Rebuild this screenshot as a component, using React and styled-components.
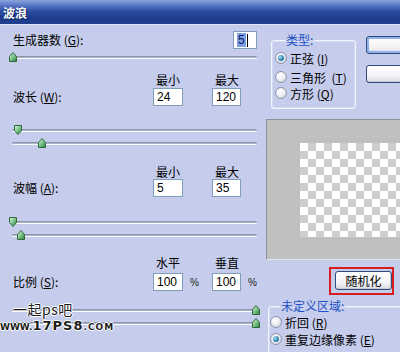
import React from "react";
import styled, { createGlobalStyle } from "styled-components";

const GlobalStyle = createGlobalStyle`
  html, body { margin: 0; padding: 0; background: #c6cdec; }
  body {
    font-family: "Noto Sans CJK SC", "Liberation Sans", sans-serif;
    font-size: 12px;
    color: #000;
  }
`;

const Window = styled.div`
  position: relative;
  width: 400px;
  height: 352px;
  overflow: hidden;
  background: #c6cdec;
  display: flex;
  flex-direction: column;
`;

const TitleBar = styled.div`
  flex: none;
  height: 24px;
  border-bottom: 1px solid #dfe5f6;
  background: linear-gradient(#8ba3dd 0%, #5877c6 22%, #2b4b9f 48%, #1c3a8b 78%, #21408f 100%);
  color: #fff;
  font-weight: bold;
  font-size: 12px;
  line-height: 25px;
  padding-left: 3px;
  text-shadow: 1px 1px 0 #0d2260;
`;

const Body = styled.div`
  display: grid;
  grid-template-columns: 266px 200px;
  align-items: start;
`;

const LeftCol = styled.div`
  display: flex;
  flex-direction: column;
  padding-left: 12px;
`;

const RightCol = styled.div`
  display: flex;
  flex-direction: column;
`;

const Label = styled.div`
  padding-left: 1px;
  line-height: 14px;
  white-space: pre;
`;

const TopRow = styled.div`
  display: flex;
  justify-content: space-between;
  align-items: center;
  width: 245px;
  margin-top: ${(p) => p.$mt}px;
`;

const ParamGrid = styled.div`
  display: grid;
  grid-template-columns: 141px 59px 45px;
  align-items: center;
  margin-top: ${(p) => p.$mt}px;
`;

const ColHead = styled.div`
  width: 30px;
  text-align: center;
  line-height: 14px;
  white-space: nowrap;
`;

const Field = styled.div`
  box-sizing: border-box;
  width: ${(p) => p.$w}px;
  height: 18px;
  border: 1px solid #7f9db9;
  background: #fff;
  font-family: "Liberation Sans", Arial, sans-serif;
  font-size: 12px;
  line-height: 16px;
  padding-left: 3px;
  display: flex;
  align-items: center;
`;

const Selected = styled.span`
  background: #7d9ee0;
  color: #0c1c66;
  padding: 0 1px;
  line-height: 14px;
`;

const Caret = styled.span`
  display: inline-block;
  width: 1px;
  height: 13px;
  background: #000;
  margin-left: 1px;
`;

const FieldWithUnit = styled.div`
  display: flex;
  align-items: center;
  gap: 7px;
`;

const Unit = styled.span`
  font-family: "Liberation Sans", Arial, sans-serif;
  font-size: 10px;
  color: #222;
`;

const SliderStack = styled.div`
  display: flex;
  flex-direction: column;
  gap: 3px;
  margin-top: ${(p) => p.$mt}px;
`;

const SliderBox = styled.div`
  position: relative;
  width: 245px;
  height: 10px;
`;

const Track = styled.div`
  position: absolute;
  left: 0;
  right: 0;
  top: 4px;
  height: 3px;
  border-radius: 2px;
  background: linear-gradient(#8c94ae 0 1px, #a9b1c7 1px 2px, #fbfcff 2px 3px);
`;

const Thumb = styled.svg`
  position: absolute;
  top: 0;
  left: ${(p) => p.$x}px;
`;

function Slider({ x, down }) {
  return (
    <SliderBox>
      <Track />
      <Thumb $x={x - 4} width="8" height="10" viewBox="0 0 8 10">
        <defs>
          <linearGradient id="tg" x1="0" y1="0" x2="1" y2="1">
            <stop offset="0" stopColor="#e8f6e8" />
            <stop offset="0.5" stopColor="#7cc48a" />
            <stop offset="1" stopColor="#2f7a3e" />
          </linearGradient>
        </defs>
        <path
          d={down ? "M0.5 0.5 H7.5 V5.5 L4 9.5 L0.5 5.5 Z" : "M4 0.5 L7.5 4.5 V9.5 H0.5 V4.5 Z"}
          fill="url(#tg)"
          stroke="#2c6a38"
          strokeWidth="1"
        />
      </Thumb>
    </SliderBox>
  );
}

const Group = styled.fieldset`
  box-sizing: border-box;
  margin: ${(p) => p.$mt}px 0 0 ${(p) => p.$ml}px;
  padding: 0 0 0 ${(p) => p.$pl}px;
  width: ${(p) => p.$w}px;
  height: ${(p) => p.$h}px;
  border: 1px solid #f3f5fc;
  border-radius: 3px;
  box-shadow: inset 0 0 0 1px #d4daf0;
  min-width: 0;
`;

const Legend = styled.legend`
  margin-left: ${(p) => p.$ml}px;
  padding: 0 1px;
  color: #2150c4;
  line-height: 14px;
`;

const RadioRow = styled.div`
  display: flex;
  align-items: center;
  gap: 3px;
  height: 16px;
  margin-top: ${(p) => p.$mt}px;
  white-space: pre;
`;

const RadioDot = styled.span`
  box-sizing: border-box;
  width: 12px;
  height: 12px;
  border-radius: 50%;
  border: 1px solid #8d94aa;
  background: radial-gradient(circle at 40% 35%, #ffffff 0%, #eceef4 45%, #c9ccd8 100%);
  display: flex;
  align-items: center;
  justify-content: center;
  flex: none;
  &::after {
    content: "";
    display: ${(p) => (p.$on ? "block" : "none")};
    width: 6px;
    height: 6px;
    border-radius: 50%;
    background: radial-gradient(circle at 35% 35%, #a9e2ee 0%, #3a8fb8 50%, #1b5d82 100%);
  }
`;

function Radio({ on, mt, children }) {
  return (
    <RadioRow $mt={mt}>
      <RadioDot $on={on} />
      <span>{children}</span>
    </RadioRow>
  );
}

const HeadRow = styled.div`
  display: flex;
  align-items: flex-start;
`;

const ButtonCol = styled.div`
  display: flex;
  flex-direction: column;
  gap: 11px;
  margin: 11px 0 0 10px;
`;

const DlgButton = styled.div`
  box-sizing: border-box;
  width: ${(p) => p.$w}px;
  height: ${(p) => p.$h}px;
  border: 1px solid #2d4a78;
  border-radius: 3px;
  background: linear-gradient(#ffffff 0%, #f4f4f6 60%, #dcdde4 100%);
  box-shadow: ${(p) => (p.$focus ? "inset 0 0 0 2px #8fb2ea" : "inset -1px -1px 0 #c8cad6")};
  display: flex;
  align-items: center;
  justify-content: center;
  font-size: 12px;
  line-height: 14px;
`;

const Preview = styled.div`
  box-sizing: border-box;
  margin-top: 10px;
  width: 200px;
  height: 141px;
  background: #c0c0c0;
  border-top: 1px solid #8c8f9c;
  border-left: 1px solid #8c8f9c;
  border-bottom: 1px solid #e2e4ec;
  padding: 23px 0 0 33px;
`;

const Checker = styled.div`
  width: 166px;
  height: 94px;
  background: conic-gradient(#cdcdcd 0 25%, #ffffff 0 50%, #cdcdcd 0 75%, #ffffff 0) 0 0 / 16px 16px;
`;

const Highlight = styled.div`
  box-sizing: border-box;
  margin: 7px 0 0 63px;
  width: 65px;
  height: 28px;
  border: 2px solid #d81f1f;
  padding: 2px 0 0 4px;
`;

const Watermark = styled.div`
  position: absolute;
  left: ${(p) => p.$x}px;
  top: ${(p) => p.$y}px;
  color: #1d1d1d;
  white-space: nowrap;
  display: flex;
  align-items: baseline;
  text-shadow: 1px 0 0 #fff, -1px 0 0 #fff, 0 1px 0 #fff, 0 -1px 0 #fff;
`;

const WmLine = styled.span`
  font-size: 14px;
  line-height: 15px;
  letter-spacing: 0.5px;
`;

const WmSmall = styled.span`
  font-family: "DejaVu Sans", sans-serif;
  font-weight: bold;
  font-size: 9px;
  letter-spacing: ${(p) => p.$ls}px;
`;

const WmBig = styled.span`
  font-family: "DejaVu Sans", sans-serif;
  font-weight: bold;
  font-size: 13px;
  letter-spacing: 1px;
`;

export default function App() {
  return (
    <>
      <GlobalStyle />
      <Window>
        <TitleBar>波浪</TitleBar>
        <Body>
          <LeftCol>
            <TopRow $mt={6}>
              <Label>
                生成器数 (<u>G</u>):
              </Label>
              <Field $w={24}>
                <Selected>5</Selected>
                <Caret />
              </Field>
            </TopRow>
            <SliderStack $mt={3}>
              <Slider x={1} />
            </SliderStack>

            <ParamGrid $mt={11}>
              <span />
              <ColHead>最小</ColHead>
              <ColHead>最大</ColHead>
            </ParamGrid>
            <ParamGrid $mt={1}>
              <Label>
                波长 (<u>W</u>):
              </Label>
              <Field $w={30}>24</Field>
              <Field $w={29}>120</Field>
            </ParamGrid>
            <SliderStack $mt={19}>
              <Slider x={6} down />
              <Slider x={30} />
            </SliderStack>

            <ParamGrid $mt={17}>
              <span />
              <ColHead>最小</ColHead>
              <ColHead>最大</ColHead>
            </ParamGrid>
            <ParamGrid $mt={0}>
              <Label>
                波幅 (<u>A</u>):
              </Label>
              <Field $w={30}>5</Field>
              <Field $w={29}>35</Field>
            </ParamGrid>
            <SliderStack $mt={20}>
              <Slider x={1} down />
              <Slider x={9} />
            </SliderStack>

            <ParamGrid $mt={16}>
              <span />
              <ColHead>水平</ColHead>
              <ColHead>垂直</ColHead>
            </ParamGrid>
            <ParamGrid $mt={3}>
              <Label>
                比例 (<u>S</u>):
              </Label>
              <FieldWithUnit>
                <Field $w={30}>100</Field>
                <Unit>%</Unit>
              </FieldWithUnit>
              <FieldWithUnit>
                <Field $w={29}>100</Field>
                <Unit>%</Unit>
              </FieldWithUnit>
            </ParamGrid>
            <SliderStack $mt={14}>
              <Slider x={244} />
              <Slider x={244} />
            </SliderStack>
          </LeftCol>

          <RightCol>
            <HeadRow>
              <Group $mt={8} $ml={5} $pl={3} $w={85} $h={76}>
                <Legend $ml={10}>类型:</Legend>
                <Radio on mt={3}>
                  正弦 (<u>I</u>)
                </Radio>
                <Radio mt={3}>
                  三角形  (<u>T</u>)
                </Radio>
                <Radio mt={0}>
                  方形 (<u>Q</u>)
                </Radio>
              </Group>
              <ButtonCol>
                <DlgButton $w={60} $h={18} $focus />
                <DlgButton $w={60} $h={18} />
              </ButtonCol>
            </HeadRow>

            <Preview>
              <Checker />
            </Preview>

            <Highlight>
              <DlgButton $w={57} $h={19}>随机化</DlgButton>
            </Highlight>

            <Group $mt={4} $ml={2} $pl={1} $w={160} $h={60}>
              <Legend $ml={10}>未定义区域:</Legend>
              <Radio mt={1}>
                折回 (<u>R</u>)
              </Radio>
              <Radio on mt={1}>
                重复边缘像素 (<u>E</u>)
              </Radio>
            </Group>
          </RightCol>
        </Body>

        <Watermark $x={13} $y={302}>
          <WmLine>一起ps吧</WmLine>
        </Watermark>
        <Watermark $x={0} $y={318}>
          <WmSmall $ls={0}>WWW.</WmSmall>
          <WmBig>17PS8</WmBig>
          <WmSmall $ls={1}>.COM</WmSmall>
        </Watermark>
      </Window>
    </>
  );
}
